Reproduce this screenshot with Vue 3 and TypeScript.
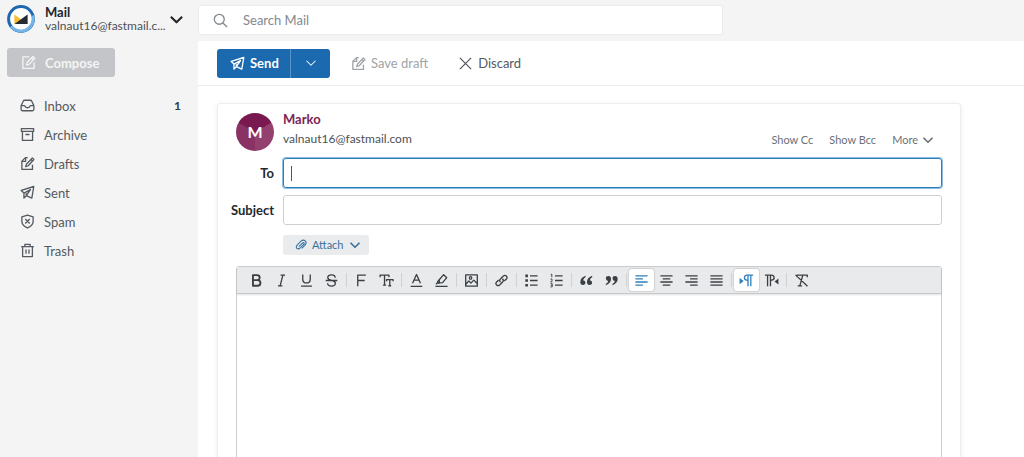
<script setup lang="ts">
import { ref } from 'vue'

interface Folder {
  name: string
  icon: string
  count?: number
}

interface Tool {
  label: string
  icon: string
  active?: boolean
}

const icons: Record<string, string> = {
  inbox:
    '<path d="M1.2 8.2 3.4 3.4Q3.8 2.4 5 2.4H11Q12.2 2.4 12.6 3.4L14.8 8.2V12Q14.8 13.6 13.2 13.6H2.8Q1.2 13.6 1.2 12ZM1.4 8.2H5Q5.6 10.4 8 10.4T11 8.2H14.6"/>',
  archive: '<path d="M1.5 1.7H14.5V4.7H1.5ZM2.6 4.7V14.3H13.4V4.7M5.8 8H10.2"/>',
  draft:
    '<path d="M8.2 1.7H5.8L2 5.5V14.3H13.3V9.2M2.2 5.8H6V1.9M13.2 2.2 14.8 3.8 8.8 10.4 6 11.4 7 8.5ZM11.8 3.8 13.3 5.3"/>',
  compose:
    '<path d="M8.8 2H2V14.3H14V8M12.8 1.6 14.8 3.6 8.6 10 5.8 10.8 6.6 8ZM11.4 3.1 13.3 5"/>',
  send: '<path d="M14.7 1.6 1.3 5.8 4.2 8.6V14L6.8 11.4 12.6 14ZM4.3 8.6 11.2 4.8 6.7 11.2V8.8"/>',
  spam: '<path d="M8 1.2 14 3V8.4Q13.5 12.6 8 14.9 2.5 12.6 2 8.4V3ZM5.6 5.3 10.4 10.1M10.4 5.3 5.6 10.1"/>',
  trash: '<path d="M1.2 3.8H14.8M5.2 3.6V1.4H10.8V3.6M2.8 4V14.5H13.2V4M6.4 7V11.4M9.6 7V11.4"/>',
  search: '<circle cx="6.7" cy="6.7" r="5.3"/><path d="M10.6 10.6 15 15"/>',
  chevron: '<path d="M2 5 8 11 14 5"/>',
  close: '<path d="M2 2 14 14M14 2 2 14"/>',
  clip: '<path d="M5.2 10.2 10 5.4Q11.2 4.4 12 5.2T11.6 7.2L6.8 12Q4.4 14 2.6 12.4T2.8 8.2L8.4 2.6Q11.2.4 13.6 2.6T13.6 7.8L9 12.4"/>',
  bold: '<path stroke-width="2" d="M4.2 2.2H8.6Q11.4 2.2 11.4 4.9T8.6 7.6H4.2ZM4.2 7.6H9.2Q12.2 7.8 12.2 10.6T9.2 13.6H4.2Z"/>',
  italic: '<path d="M7 2.3H11.8M4.2 13.7H9M9.5 2.3 6.5 13.7"/>',
  underline: '<path d="M4 1.6V6.6Q4 10.6 8 10.6T12 6.6V1.6M2.2 14H13.8"/>',
  strike: '<path d="M12 5Q11.8 2 8 2T4 4.8Q4 7 8 7.8T12.2 11Q12 14 8 14T3.8 11M1.8 8H14.2"/>',
  font: '<path d="M4 14V2.3H12.6M4 8H11.4"/>',
  size: '<path d="M1.2 4.6V2.2H10.6V4.6M5.9 2.2V13M4.2 13H7.6M8 8.8V7H15V8.8M11.5 7V13.6M10 13.6H13"/>',
  color: '<path d="M3.8 11 8 1.6 12.2 11M5.4 7.6H10.6M1.8 14.2H14.2"/>',
  highlight:
    '<path d="M10.3 1.8 13.6 5 9.2 10.2 5.8 10.5 5.6 7.2ZM5.4 7.4 3.8 9.2 4.6 11 6.4 10.6M3.6 10.4 2.2 12.2M1.5 14.3H14.5"/>',
  image:
    '<path d="M1.8 2H14.2V14H1.8ZM2 12 5.2 8.4 7.4 10.8 10.4 7.6 14 11.2"/><circle cx="7" cy="5.2" r="1.3"/>',
  link: '<path d="M7 9.8Q5.2 8 6.8 6.4L10 3.2Q11.6 1.8 13.2 3.2T13.2 6.4L11 8.6M9 6.2Q10.8 8 9.2 9.6L6 12.8Q4.4 14.2 2.8 12.8T2.8 9.6L5 7.4"/>',
  bullets:
    '<path d="M6.4 3H14.5M6.4 8H14.5M6.4 13H14.5"/><path stroke-width="2.8" d="M1.4 3H4.2M1.4 8H4.2M1.4 13H4.2"/>',
  numbers:
    '<path d="M6.4 3H14.5M6.4 8H14.5M6.4 13H14.5"/><path stroke-width="1" d="M1.8 1.8 3 1.2V4.6M1.6 6.5H3.2V8L1.8 9.5H3.6M1.6 11.4H3.4V14.8H1.6M2 13H3.4"/>',
  quote:
    '<path fill="currentColor" stroke="none" d="M6.8 3Q1.4 5.2 1.4 9.6 1.4 12.8 4.2 12.8 6.9 12.8 6.9 10.2 6.9 7.7 4.4 7.6 4.8 5.5 7.1 4.2ZM13.9 3Q8.5 5.2 8.5 9.6 8.5 12.8 11.3 12.8 14 12.8 14 10.2 14 7.7 11.5 7.6 11.9 5.5 14.2 4.2Z"/>',
  unquote:
    '<path fill="currentColor" stroke="none" d="M2.1 13Q7.5 10.8 7.5 6.4 7.5 3.2 4.7 3.2 2 3.2 2 5.8 2 8.3 4.5 8.4 4.1 10.5 1.8 11.8ZM9.2 13Q14.6 10.8 14.6 6.4 14.6 3.2 11.8 3.2 9.1 3.2 9.1 5.8 9.1 8.3 11.6 8.4 11.2 10.5 8.9 11.8Z"/>',
  left: '<path d="M1.5 3H14.5M1.5 6.3H9.5M1.5 9.6H14.5M1.5 12.9H9.5"/>',
  center: '<path d="M1.5 3H14.5M4 6.3H12M1.5 9.6H14.5M4 12.9H12"/>',
  right: '<path d="M1.5 3H14.5M6.5 6.3H14.5M1.5 9.6H14.5M6.5 12.9H14.5"/>',
  justify: '<path d="M1.5 3H14.5M1.5 6.3H14.5M1.5 9.6H14.5M1.5 12.9H14.5"/>',
  ltr: '<path d="M15 2.3H8.4Q5.8 2.6 5.8 5T8.4 7.7H9.6M9.6 2.3V14M12.6 2.3V14"/><path fill="currentColor" stroke="none" d="M.6 5.2 5 8.6.6 12Z"/>',
  rtl: '<path d="M1 2.3H8Q10.8 2.6 10.8 5T8 7.7H6.9M3.8 2.3V14M6.9 2.3V14"/><path fill="currentColor" stroke="none" d="M15.4 5.8 11.2 9 15.4 12.2Z"/>',
  clear: '<path d="M3.4 4.4V2.2H14.2V4.4M9.4 2.2 6.2 13.8M4 13.8H8.6M1.6 2 14.4 14.2"/>',
}

const folders: Folder[] = [
  { name: 'Inbox', icon: 'inbox', count: 1 },
  { name: 'Archive', icon: 'archive' },
  { name: 'Drafts', icon: 'draft' },
  { name: 'Sent', icon: 'send' },
  { name: 'Spam', icon: 'spam' },
  { name: 'Trash', icon: 'trash' },
]

const toolGroups: Tool[][] = [
  [
    { label: 'Bold', icon: 'bold' },
    { label: 'Italic', icon: 'italic' },
    { label: 'Underline', icon: 'underline' },
    { label: 'Strikethrough', icon: 'strike' },
  ],
  [
    { label: 'Font face', icon: 'font' },
    { label: 'Font size', icon: 'size' },
  ],
  [
    { label: 'Text color', icon: 'color' },
    { label: 'Highlight', icon: 'highlight' },
  ],
  [{ label: 'Insert image', icon: 'image' }],
  [{ label: 'Insert link', icon: 'link' }],
  [
    { label: 'Bulleted list', icon: 'bullets' },
    { label: 'Numbered list', icon: 'numbers' },
  ],
  [
    { label: 'Quote', icon: 'quote' },
    { label: 'Unquote', icon: 'unquote' },
  ],
  [
    { label: 'Align left', icon: 'left', active: true },
    { label: 'Align center', icon: 'center' },
    { label: 'Align right', icon: 'right' },
    { label: 'Justify', icon: 'justify' },
  ],
  [
    { label: 'Left to right', icon: 'ltr', active: true },
    { label: 'Right to left', icon: 'rtl' },
  ],
  [{ label: 'Clear formatting', icon: 'clear' }],
]

const search = ref('')
const to = ref('')
const subject = ref('')
const body = ref('')
</script>

<template>
  <div class="app">
    <aside class="sidebar">
      <button class="account" type="button">
        <svg class="logo" viewBox="0 0 28 28" aria-hidden="true">
          <circle cx="14" cy="14" r="12.4" fill="#fff" stroke="#1c67b0" stroke-width="3" />
          <path d="M25.8 10.5A12.4 12.4 0 0 1 4 21.3" fill="none" stroke="#74b5e8" stroke-width="3" />
          <path d="M7.4 9.6 14.2 14.4 7.4 19Z" fill="#fdbc2c" />
          <path d="M20.6 9.6V19H7.4Z" fill="#252a33" />
        </svg>
        <span class="account-text">
          <strong>Mail</strong>
          <span class="account-mail">valnaut16@fastmail.c...</span>
        </span>
        <svg class="icon heavy" viewBox="0 0 16 16" aria-hidden="true" v-html="icons.chevron"></svg>
      </button>
      <button class="compose" type="button">
        <svg class="icon" viewBox="0 0 16 16" aria-hidden="true" v-html="icons.compose"></svg>
        Compose
      </button>
      <nav class="folders" aria-label="Folders">
        <a v-for="folder in folders" :key="folder.name" class="folder" href="#">
          <svg class="icon" viewBox="0 0 16 16" aria-hidden="true" v-html="icons[folder.icon]"></svg>
          <span class="folder-name">{{ folder.name }}</span>
          <strong v-if="folder.count" class="count">{{ folder.count }}</strong>
        </a>
      </nav>
    </aside>

    <div class="column">
      <header class="top">
        <label class="search">
          <svg class="icon" viewBox="0 0 16 16" aria-hidden="true" v-html="icons.search"></svg>
          <input v-model="search" type="search" placeholder="Search Mail" aria-label="Search Mail" />
        </label>
      </header>

      <main class="main">
        <div class="actions">
          <div class="send-group">
            <button class="send" type="button">
              <svg class="icon" viewBox="0 0 16 16" aria-hidden="true" v-html="icons.send"></svg>
              Send
            </button>
            <button class="send-more" type="button" aria-label="Send options">
              <svg class="icon small" viewBox="0 0 16 16" aria-hidden="true" v-html="icons.chevron"></svg>
            </button>
          </div>
          <button class="plain save" type="button" disabled>
            <svg class="icon" viewBox="0 0 16 16" aria-hidden="true" v-html="icons.draft"></svg>
            Save draft
          </button>
          <button class="plain" type="button">
            <svg class="icon" viewBox="0 0 16 16" aria-hidden="true" v-html="icons.close"></svg>
            Discard
          </button>
        </div>

        <div class="canvas">
          <form class="card" @submit.prevent>
            <div class="from">
              <span class="avatar">M</span>
              <div class="sender">
                <strong class="sender-name">Marko</strong>
                <span class="sender-mail">valnaut16@fastmail.com</span>
              </div>
              <div class="extras">
                <button type="button">Show Cc</button>
                <button type="button">Show Bcc</button>
                <button type="button">
                  More
                  <svg class="icon small strong" viewBox="0 0 16 16" aria-hidden="true" v-html="icons.chevron"></svg>
                </button>
              </div>
            </div>

            <div class="fields">
              <label for="to">To</label>
              <div class="field active">
                <input id="to" v-model="to" type="text" />
                <span class="caret" aria-hidden="true"></span>
              </div>
              <label for="subject">Subject</label>
              <div class="field">
                <input id="subject" v-model="subject" type="text" />
              </div>
            </div>

            <button class="attach" type="button">
              <svg class="icon small" viewBox="0 0 16 16" aria-hidden="true" v-html="icons.clip"></svg>
              <span>Attach</span>
              <svg class="icon small strong" viewBox="0 0 16 16" aria-hidden="true" v-html="icons.chevron"></svg>
            </button>

            <div class="editor">
              <div class="tools" role="toolbar" aria-label="Formatting">
                <div v-for="(group, index) in toolGroups" :key="index" class="tool-group">
                  <button
                    v-for="tool in group"
                    :key="tool.label"
                    type="button"
                    class="tool"
                    :class="{ on: tool.active }"
                    :aria-label="tool.label"
                  >
                    <svg class="icon" viewBox="0 0 16 16" aria-hidden="true" v-html="icons[tool.icon]"></svg>
                  </button>
                </div>
              </div>
              <textarea v-model="body" aria-label="Message body"></textarea>
            </div>
          </form>
        </div>
      </main>
    </div>
  </div>
</template>

<style>
body {
  margin: 0;
  overflow: hidden;
}
</style>

<style scoped>
* {
  box-sizing: border-box;
}

.app {
  display: grid;
  grid-template-columns: 198px minmax(0, 1fr);
  height: 100vh;
  overflow: hidden;
  background: #f4f4f4;
  color: #545a60;
  font-family: Lato, 'Liberation Sans', sans-serif;
  font-size: 13px;
  line-height: 16px;
}

button,
input,
textarea {
  margin: 0;
  padding: 0;
  border: 0;
  background: none;
  color: inherit;
  font: inherit;
}

button {
  display: flex;
  align-items: center;
  white-space: nowrap;
}

input,
textarea {
  outline: 0;
}

.icon {
  flex: none;
  width: 15px;
  height: 15px;
  fill: none;
  stroke: currentColor;
  stroke-width: 1.4;
  stroke-linejoin: round;
}

.icon.small {
  width: 12px;
  height: 12px;
}

.icon.heavy,
.icon.strong {
  stroke-width: 2.2;
}

.sidebar {
  padding: 5px 14px 0 7px;
}

.account {
  width: 100%;
  gap: 10px;
  color: #1f2429;
  text-align: left;
}

.logo {
  flex: none;
  width: 28px;
  height: 28px;
}

.account-text {
  display: flex;
  flex-direction: column;
  flex: 1;
  min-width: 0;
  line-height: 14px;
}

.account-mail {
  color: #4b5157;
  font-size: 12px;
}

.account .icon {
  margin-left: -8px;
}

.compose {
  gap: 9px;
  width: 108px;
  height: 29px;
  margin-top: 15px;
  padding-left: 14px;
  border-radius: 3px;
  background: #c3c5c8;
  color: #f4f4f4;
  font-weight: 700;
}

.folders {
  margin-top: 14px;
}

.folder {
  display: flex;
  align-items: center;
  gap: 9px;
  height: 29px;
  padding: 0 3px 0 13px;
  color: #545a60;
  text-decoration: none;
}

.folder-name {
  flex: 1;
}

.count {
  color: #33383d;
  font-size: 12px;
}

.column {
  display: flex;
  flex-direction: column;
  min-width: 0;
  min-height: 0;
}

.top {
  padding: 5px 0 6px;
}

.search {
  display: flex;
  align-items: center;
  gap: 15px;
  width: 525px;
  max-width: 100%;
  height: 30px;
  padding: 0 14px;
  border: 1px solid #ebebeb;
  border-radius: 3px;
  background: #fff;
  color: #83888e;
}

.search input {
  flex: 1;
  min-width: 0;
}

.search input::placeholder {
  color: #83888e;
  opacity: 1;
}

.main {
  display: flex;
  flex: 1;
  flex-direction: column;
  min-height: 0;
  background: #fff;
}

.actions {
  display: flex;
  align-items: center;
  height: 45px;
  flex: none;
  padding: 0 19px;
  border-bottom: 1px solid #ededed;
}

.send-group {
  display: flex;
  height: 29px;
  overflow: hidden;
  border-radius: 3px;
  background: #1b69af;
  color: #fff;
}

.send {
  gap: 5px;
  width: 73px;
  padding-left: 13px;
  font-weight: 700;
}

.send-more {
  justify-content: center;
  width: 40px;
  border-left: 1px solid #5a93c6;
}

.plain {
  gap: 5px;
  margin-left: 30px;
}

.plain.save {
  margin-left: 21px;
  color: #a0a4a8;
}

.canvas {
  flex: 1;
  min-height: 0;
  overflow: hidden;
  padding: 17px 19px 0;
}

.card {
  max-width: 744px;
  padding: 9px 18px 18px;
  border: 1px solid #eee;
  border-radius: 3px;
  box-shadow: 0 1px 5px rgb(0 0 0 / 8%);
}

.from {
  display: flex;
  gap: 9px;
  height: 38px;
}

.avatar {
  display: grid;
  flex: none;
  place-items: center;
  width: 38px;
  height: 38px;
  border-radius: 50%;
  background: conic-gradient(from -60deg, #7a1950 0 120deg, #93406e 120deg 240deg, #8a3263 240deg);
  color: #fff;
  font-size: 16px;
  font-weight: 700;
}

.sender {
  display: flex;
  flex: 1;
  flex-direction: column;
  justify-content: space-between;
  margin: -2px 0 4px;
}

.sender-name {
  color: #7d2455;
}

.sender-mail {
  color: #4b5157;
  font-size: 12px;
}

.extras {
  display: flex;
  align-items: flex-end;
  gap: 16px;
  padding: 0 8px 3px 0;
  color: #6b7177;
  font-size: 11px;
}

.extras button {
  gap: 4px;
}

.fields {
  display: grid;
  grid-template-columns: 38px minmax(0, 1fr);
  gap: 7px 9px;
  align-items: center;
  margin-top: 7px;
}

.fields label {
  justify-self: end;
  color: #24292e;
  font-weight: 700;
}

.field {
  position: relative;
  height: 30px;
  border: 1px solid #cfcfcf;
  border-radius: 3px;
}

.field.active {
  border-color: #2e7fbd;
  box-shadow: 0 0 0 1px #8bbbe0;
}

.field input {
  display: block;
  width: 100%;
  height: 100%;
  padding: 0 8px;
}

.caret {
  position: absolute;
  top: 7px;
  left: 7px;
  width: 1px;
  height: 15px;
  background: #555;
}

.attach {
  gap: 5px;
  height: 20px;
  margin: 10px 0 11px 47px;
  padding: 0 8px 0 12px;
  border-radius: 3px;
  background: #e9ebed;
  color: #38709f;
  font-size: 11px;
}

.editor {
  border: 1px solid #cbcdcf;
  border-radius: 3px;
}

.tools {
  display: flex;
  height: 27px;
  padding: 1px 7px;
  border-bottom: 1px solid #c6c8ca;
  background: #e9eaec;
  box-shadow: 0 1px 2px rgb(0 0 0 / 12%);
  color: #3b4045;
}

.tool-group {
  display: flex;
  align-items: center;
}

.tool-group + .tool-group::before {
  content: '';
  width: 1px;
  height: 14px;
  margin: 0 2px;
  background: #cfd1d3;
}

.tool {
  justify-content: center;
  width: 25px;
  height: 22px;
  border-radius: 3px;
}

.tool.on {
  background: #fff;
  box-shadow: 0 0 1px 1px #cfd1d3;
  color: #2f7fbc;
}

textarea {
  display: block;
  width: 100%;
  height: 240px;
  padding: 8px;
  resize: none;
}
</style>
